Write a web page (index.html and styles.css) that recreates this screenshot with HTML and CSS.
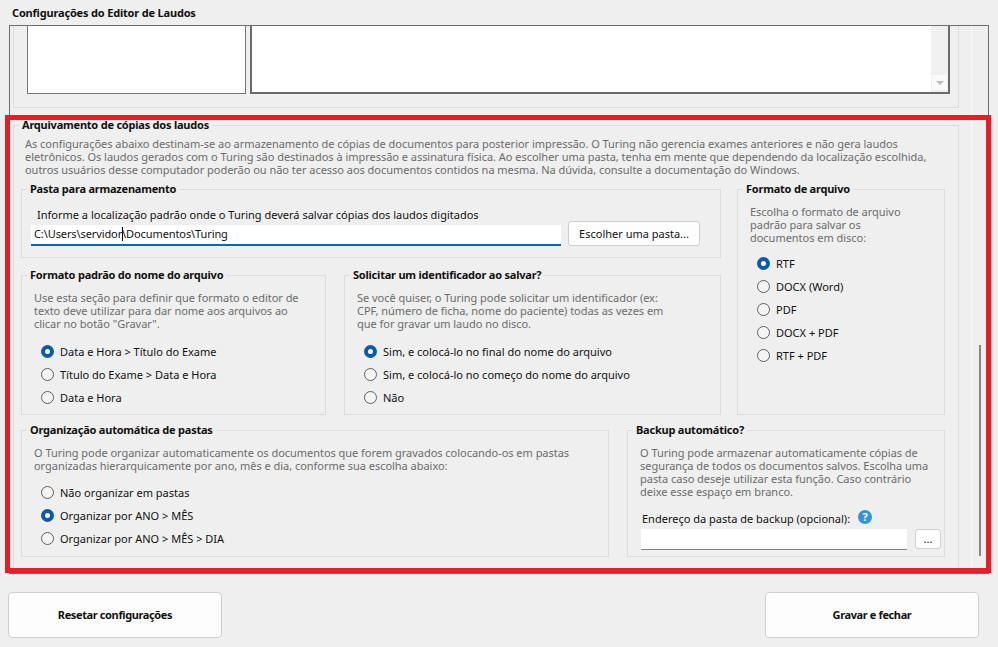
FILE: index.html
```html
<!DOCTYPE html>
<html lang="pt-BR">
<head>
<meta charset="utf-8">
<title>Configurações do Editor de Laudos</title>
<link rel="stylesheet" href="styles.css">
</head>
<body>
<h1 class="title">Configurações do Editor de Laudos</h1>
<div class="panel">
  <div class="panel-main">
    <div class="upper">
      <div class="box box-left"></div>
      <div class="box box-right">
        <div class="box-scroll"><span class="box-scroll-btn"><span class="caret"></span></span></div>
      </div>
    </div>
    <section class="group archive">
      <h2 class="legend">Arquivamento de cópias dos laudos</h2>
      <p class="desc">As configurações abaixo destinam-se ao armazenamento de cópias de documentos para posterior impressão. O Turing não gerencia exames anteriores e não gera laudos<br>eletrônicos. Os laudos gerados com o Turing são destinados à impressão e assinatura física. Ao escolher uma pasta, tenha em mente que dependendo da localização escolhida,<br>outros usuários desse computador poderão ou não ter acesso aos documentos contidos na mesma. Na dúvida, consulte a documentação do Windows.</p>
      <div class="row row-top">
        <div class="col-left">
          <section class="group pasta">
            <h2 class="legend">Pasta para armazenamento</h2>
            <div class="field-label">Informe a localização padrão onde o Turing deverá salvar cópias dos laudos digitados</div>
            <div class="pasta-row">
              <div class="input input-active">C:\Users\servidor\Documentos\Turing<span class="cursor"></span></div>
              <button class="btn btn-small">Escolher uma pasta...</button>
            </div>
          </section>
          <div class="row row-sub">
            <section class="group nome">
              <h2 class="legend">Formato padrão do nome do arquivo</h2>
              <p class="desc">Use esta seção para definir que formato o editor de<br>texto deve utilizar para dar nome aos arquivos ao<br>clicar no botão "Gravar".</p>
              <ul class="radios">
                <li class="radio on">Data e Hora &gt; Título do Exame</li>
                <li class="radio">Título do Exame &gt; Data e Hora</li>
                <li class="radio">Data e Hora</li>
              </ul>
            </section>
            <section class="group ident">
              <h2 class="legend">Solicitar um identificador ao salvar?</h2>
              <p class="desc">Se você quiser, o Turing pode solicitar um identificador (ex:<br>CPF, número de ficha, nome do paciente) todas as vezes em<br>que for gravar um laudo no disco.</p>
              <ul class="radios">
                <li class="radio on">Sim, e colocá-lo no final do nome do arquivo</li>
                <li class="radio">Sim, e colocá-lo no começo do nome do arquivo</li>
                <li class="radio">Não</li>
              </ul>
            </section>
          </div>
        </div>
        <section class="group formato">
          <h2 class="legend">Formato de arquivo</h2>
          <p class="desc">Escolha o formato de arquivo<br>padrão para salvar os<br>documentos em disco:</p>
          <ul class="radios">
            <li class="radio on">RTF</li>
            <li class="radio">DOCX (Word)</li>
            <li class="radio">PDF</li>
            <li class="radio">DOCX + PDF</li>
            <li class="radio">RTF + PDF</li>
          </ul>
        </section>
      </div>
      <div class="row row-bottom">
        <section class="group org">
          <h2 class="legend">Organização automática de pastas</h2>
          <p class="desc">O Turing pode organizar automaticamente os documentos que forem gravados colocando-os em pastas<br>organizadas hierarquicamente por ano, mês e dia, conforme sua escolha abaixo:</p>
          <ul class="radios">
            <li class="radio">Não organizar em pastas</li>
            <li class="radio on">Organizar por ANO &gt; MÊS</li>
            <li class="radio">Organizar por ANO &gt; MÊS &gt; DIA</li>
          </ul>
        </section>
        <section class="group backup">
          <h2 class="legend">Backup automático?</h2>
          <p class="desc">O Turing pode armazenar automaticamente cópias de<br>segurança de todos os documentos salvos. Escolha uma<br>pasta caso deseje utilizar esta função. Caso contrário<br>deixe esse espaço em branco.</p>
          <div class="backup-label">Endereço da pasta de backup (opcional):
            <span class="help">?</span>
          </div>
          <div class="backup-row">
            <div class="input input-plain"></div>
            <button class="btn btn-dots">...</button>
          </div>
        </section>
      </div>
    </section>
  </div>
  <div class="panel-scroll"><span class="thumb"></span></div>
</div>
<div class="actions">
  <button class="btn btn-big">Resetar configurações</button>
  <button class="btn btn-big">Gravar e fechar</button>
</div>
<div class="highlight"></div>
</body>
</html>
```
FILE: styles.css
```css
*, *::before, *::after { box-sizing: border-box; }
html, body { margin: 0; padding: 0; }
body {
  width: 998px;
  height: 647px;
  overflow: hidden;
  position: relative;
  background: #efefef;
  font-family: "Noto Sans", sans-serif;
  font-size: 11px;
  line-height: 13px;
  color: #111;
}
.title {
  margin: 0;
  padding: 6px 0 0 12px;
  height: 25px;
  font-size: 11px;
  line-height: 13px;
  font-weight: 700;
  letter-spacing: -0.18px;
}
.panel {
  margin-left: 9px;
  width: 980px;
  height: 549px;
  border: 1px solid #6d6d6d;
  display: flex;
}
.panel-main {
  width: 962px;
  padding-left: 3px;
  border-right: 1px solid #f8f8f8;
}
.upper {
  width: 946px;
  height: 82px;
  display: flex;
  gap: 4px;
  padding-left: 13px;
  border: 1px solid #dcdcdc;
  border-top: 0;
}
.box {
  height: 68px;
  background: #fff;
  border: 1px solid #777;
  border-top: 0;
}
.box-left { width: 219px; }
.box-right {
  width: 700px;
  border-width: 0 2px 2px 2px;
  border-color: #6a6a6a;
  display: flex;
  justify-content: flex-end;
}
.box-scroll {
  width: 17px;
  background: #f0f0f0;
  display: flex;
  align-items: flex-end;
  justify-content: center;
  padding-bottom: 2px;
}
.box-scroll-btn {
  width: 15px;
  height: 15px;
  background: #fafafa;
  display: flex;
  align-items: center;
  justify-content: center;
}
.caret {
  width: 0;
  height: 0;
  border: 4px solid transparent;
  border-top: 4px solid #bbb;
  border-bottom: 0;
}
.group {
  position: relative;
  border: 1px solid #dcdcdc;
}
.legend {
  position: absolute;
  top: -8px;
  left: 5px;
  margin: 0;
  padding: 0 3px;
  background: #efefef;
  font-size: 11px;
  line-height: 13px;
  font-weight: 700;
  letter-spacing: -0.22px;
  white-space: nowrap;
}
.desc {
  margin: 0;
  color: #6b6b6b;
  white-space: nowrap;
  letter-spacing: -0.03px;
}
.archive {
  width: 946px;
  height: 446px;
  margin-top: 17px;
  padding: 11px 0 0 7px;
}
.archive > .desc { padding-left: 4px; }
.row { display: flex; }
.row-top { margin-top: 13px; gap: 16px; }
.col-left { width: 700px; }
.row-sub { margin-top: 17px; gap: 18px; }
.pasta { height: 69px; padding: 18px 0 0 15px; }
.field-label { white-space: nowrap; }
.pasta-row { display: flex; gap: 7px; margin-left: -6px; align-items: flex-end; }
.input {
  background: #fff;
  height: 21px;
  position: relative;
}
.input-active {
  width: 530px;
  padding: 2px 0 0 3px;
  border-bottom: 2px solid #0067c0;
  white-space: nowrap;
  letter-spacing: -0.1px;
}
.cursor {
  position: absolute;
  left: 91px;
  top: 2px;
  width: 1px;
  height: 14px;
  background: #000;
}
.btn {
  font: inherit;
  color: #111;
  background: #fdfdfd;
  border: 1px solid #cfcfcf;
  border-radius: 3px;
  padding: 0;
}
.btn-small { width: 132px; height: 25px; }
.nome { width: 305px; height: 140px; }
.ident { width: 377px; height: 140px; }
.formato { width: 208px; height: 226px; padding: 15px 0 0 12px; }
.nome, .ident, .org, .backup { padding: 15px 0 0 12px; }
.radios {
  list-style: none;
  margin: 0;
  padding: 0 0 0 7px;
}
.nome .radios, .ident .radios { margin-top: 10px; }
.formato .radios { margin-top: 8px; }
.org .radios { margin-top: 9px; }
.radio {
  position: relative;
  height: 23px;
  line-height: 23px;
  padding-left: 19px;
  white-space: nowrap;
}
.radio::before {
  content: "";
  position: absolute;
  left: 0;
  top: 5px;
  width: 13px;
  height: 13px;
  border-radius: 50%;
  border: 1px solid #5f5f5f;
  background: #f4f4f4;
}
.radio.on::before {
  border: 4px solid #0a5bb0;
  background: #fff;
}
.row-bottom { margin-top: 15px; gap: 18px; }
.org { width: 588px; height: 127px; }
.backup { width: 318px; height: 127px; }
.backup-label {
  margin-top: 14px;
  padding-left: 2px;
  white-space: nowrap;
  display: flex;
  align-items: center;
  gap: 8px;
}
.help {
  width: 14px;
  height: 14px;
  margin-top: -4px;
  border-radius: 50%;
  background: #2f94dc;
  color: #fff;
  font-weight: 700;
  font-size: 11px;
  line-height: 14px;
  text-align: center;
}
.backup-row { display: flex; gap: 8px; margin-top: 4px; margin-left: 1px; }
.input-plain {
  width: 266px;
  height: 21px;
  border-bottom: 1px solid #808080;
}
.btn-dots { width: 26px; height: 20px; line-height: 14px; }
.panel-scroll {
  width: 16px;
  padding-top: 319px;
  display: flex;
  justify-content: center;
}
.thumb { width: 2px; height: 211px; background: #868686; }
.actions {
  display: flex;
  justify-content: space-between;
  padding: 18px 19px 0 8px;
}
.btn-big {
  width: 214px;
  height: 46px;
  padding-bottom: 2px;
  font-weight: 700;
  letter-spacing: -0.38px;
  border-radius: 4px;
}
.highlight {
  position: absolute;
  left: 5px;
  top: 115px;
  width: 986px;
  height: 458px;
  border: 5px solid #ed1c24;
}
```
